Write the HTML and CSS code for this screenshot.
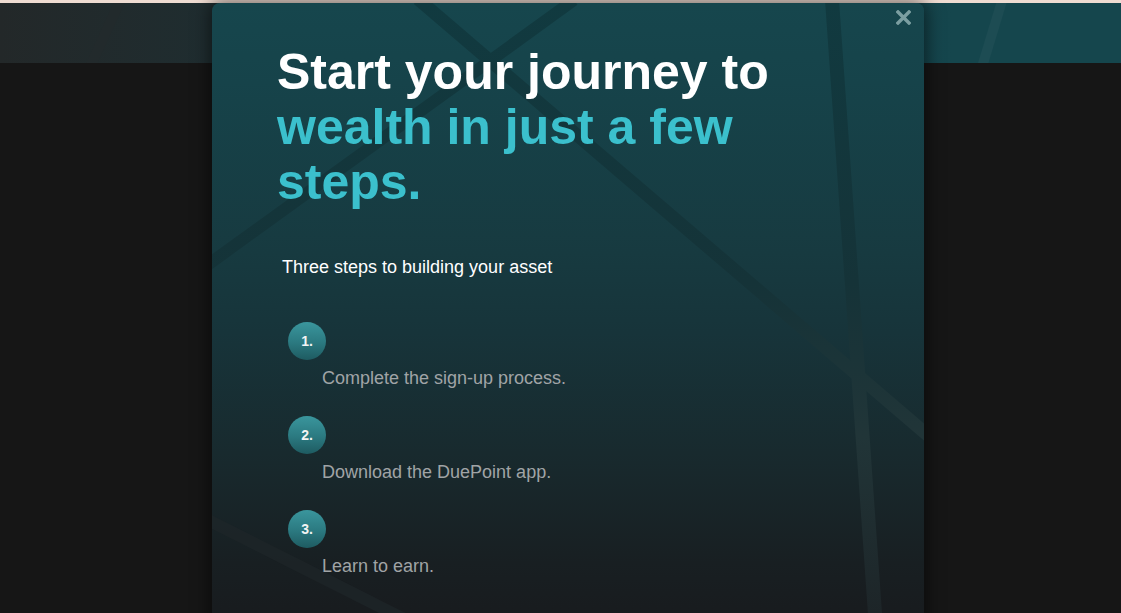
FILE: index.html
```html
<!DOCTYPE html>
<html lang="en">
<head>
<meta charset="utf-8">
<title>Start your journey</title>
<link rel="stylesheet" href="styles.css">
</head>
<body>
<div class="topline"></div>
<header class="header">
  <svg class="header-deco" width="1121" height="60" viewBox="0 0 1121 60" aria-hidden="true">
    <line x1="1002" y1="-2" x2="982" y2="64" stroke="#1d4c53" stroke-width="10"/>
    <line x1="120" y1="-2" x2="90" y2="64" stroke="#242a2c" stroke-width="10" opacity="0.6"/>
  </svg>
</header>
<main class="page"></main>

<section class="modal" role="dialog" aria-label="Start your journey">
  <svg class="modal-deco" width="712" height="620" viewBox="0 0 712 620" aria-hidden="true">
    <defs>
      <linearGradient id="ln" gradientUnits="userSpaceOnUse" x1="0" y1="0" x2="0" y2="620">
        <stop offset="0" stop-color="#113a40"/>
        <stop offset="0.45" stop-color="#153338"/>
        <stop offset="0.7" stop-color="#213538"/>
        <stop offset="1" stop-color="#1d2427"/>
      </linearGradient>
    </defs>
    <line x1="206" y1="-4" x2="760" y2="470" stroke="url(#ln)" stroke-width="13"/>
    <line x1="-10" y1="266" x2="362" y2="-3" stroke="url(#ln)" stroke-width="12"/>
    <line x1="620" y1="-3" x2="664" y2="625" stroke="url(#ln)" stroke-width="14"/>
    <line x1="-10" y1="514" x2="210" y2="625" stroke="#1f2629" stroke-width="12" opacity="0.7"/>
  </svg>
  <button class="close" aria-label="Close">
    <svg width="15" height="15" viewBox="0 0 15 15"><path d="M2 2 L13 13 M13 2 L2 13" stroke="#7b9ea1" stroke-width="3.4" stroke-linecap="square"/></svg>
  </button>
  <div class="modal-body">
    <h1 class="title">Start your journey to <span class="accent">wealth in just a few steps.</span></h1>
    <p class="subtitle">Three steps to building your asset</p>
    <ol class="steps">
      <li class="step"><span class="num">1.</span><span class="step-text">Complete the sign-up process.</span></li>
      <li class="step"><span class="num">2.</span><span class="step-text">Download the DuePoint app.</span></li>
      <li class="step"><span class="num">3.</span><span class="step-text">Learn to earn.</span></li>
    </ol>
  </div>
</section>
</body>
</html>
```
FILE: styles.css
```css
html, body {
  margin: 0;
  padding: 0;
  height: 100%;
}
body {
  background: #161616;
  font-family: "Liberation Sans", Arial, sans-serif;
  overflow: hidden;
  position: relative;
}
.topline {
  height: 3px;
  background: #efdcd2;
}
.header {
  height: 60px;
  position: relative;
  overflow: hidden;
  background: linear-gradient(90deg, #232829 0%, #1f2d30 19%, #17414a 70%, #15464d 85%, #15464d 100%);
}
.header-deco {
  position: absolute;
  left: 0;
  top: 0;
}
.modal {
  position: absolute;
  left: 212px;
  top: 3px;
  width: 712px;
  height: 620px;
  border-radius: 8px 8px 0 0;
  overflow: hidden;
  background: linear-gradient(180deg, #16464d 0px, #16434a 80px, #173a40 250px, #17343a 330px, #182a2e 450px, #181f22 560px, #181b1e 620px);
  box-shadow: 0 0 18px 2px rgba(0, 0, 0, 0.55);
}
.modal-deco {
  position: absolute;
  left: 0;
  top: 0;
}
.close {
  position: absolute;
  top: 7px;
  right: 13px;
  width: 15px;
  height: 15px;
  padding: 0;
  border: 0;
  background: none;
  cursor: pointer;
  display: block;
}
.close svg { display: block; }
.modal-body {
  position: relative;
  padding: 42px 66px 0 65px;
}
.title {
  margin: 0;
  font-size: 50px;
  line-height: 55px;
  font-weight: 700;
  color: #ffffff;
  width: 520px;
}
.accent {
  color: #3bc0cd;
}
.subtitle {
  margin: 46px 0 0 5px;
  font-size: 18px;
  line-height: 22px;
  color: #ffffff;
}
.steps {
  list-style: none;
  margin: 44px 0 0 0;
  padding: 0 0 0 11px;
  display: flex;
  flex-direction: column;
  gap: 27px;
}
.step {
  display: flex;
  flex-direction: column;
  align-items: flex-start;
  gap: 7px;
}
.num {
  width: 38px;
  height: 38px;
  border-radius: 50%;
  background: linear-gradient(180deg, #3a969d 0%, #2b7980 55%, #1e5b61 100%);
  color: #f2f4f4;
  font-weight: 700;
  font-size: 14px;
  display: flex;
  align-items: center;
  justify-content: center;
}
.step-text {
  margin-left: 34px;
  font-size: 18px;
  line-height: 22px;
  color: #a0a4a6;
}
```
